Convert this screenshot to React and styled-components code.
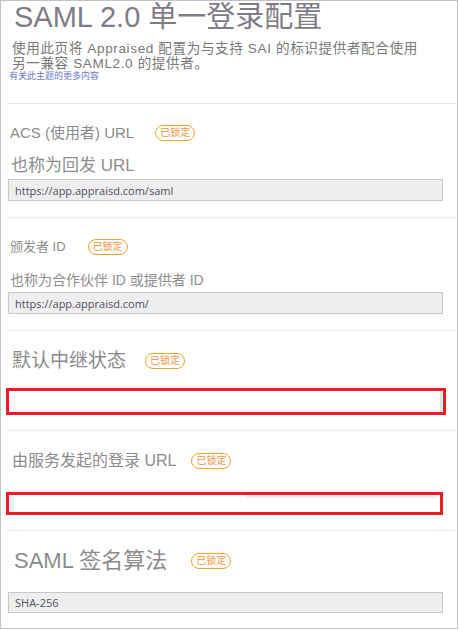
import React from "react";
import styled, { createGlobalStyle } from "styled-components";

const Global = createGlobalStyle`
  html, body { margin: 0; padding: 0; background: #ffffff; }
  body { font-family: "Liberation Sans", "Noto Sans CJK SC", sans-serif; }
  * { box-sizing: border-box; }
`;

const Frame = styled.div`
  width: 458px;
  height: 629px;
  border: 1px solid #c4c4c4;
  display: flex;
  flex-direction: column;
  overflow: hidden;
  background: #fff;
`;

const Header = styled.header`
  height: 102px;
  display: flex;
  flex-direction: column;
`;

const Title = styled.h1`
  margin: 0;
  padding-left: 13px;
  font-weight: normal;
  font-size: 29px;
  line-height: 32px;
  color: #7f7c87;
  white-space: nowrap;
`;

const Description = styled.p`
  margin: 8px 0 0 0;
  padding-left: 11px;
  font-size: 13.6px;
  line-height: 15px;
  letter-spacing: 0.6px;
  color: #787878;
  white-space: nowrap;
`;

const MoreLink = styled.a`
  display: block;
  padding-left: 8px;
  font-size: 9px;
  line-height: 10px;
  color: #6a7cd0;
  text-decoration: none;
`;

const Section = styled.section`
  margin-left: 7px;
  border-top: 1px solid #e8e8e8;
  padding-bottom: ${(p) => p.$pb}px;
  display: flex;
  flex-direction: column;
`;

const HeadRow = styled.div`
  margin-top: ${(p) => p.$mt}px;
  height: 16px;
  display: flex;
  align-items: center;
  gap: ${(p) => p.$gap}px;
  padding-left: ${(p) => p.$indent}px;
`;

const Label = styled.span`
  font-size: ${(p) => p.$size}px;
  line-height: 16px;
  color: #8c8c8c;
  white-space: nowrap;
`;

const Badge = styled.span`
  width: 40px;
  height: 16px;
  border: 1.5px solid #f6a02c;
  border-radius: 8px;
  display: inline-flex;
  align-items: center;
  justify-content: center;
  font-size: 10px;
  line-height: 12px;
  color: #f2953d;
  flex: none;
`;

const SubLabel = styled.div`
  margin-top: ${(p) => p.$mt}px;
  padding-left: ${(p) => p.$indent}px;
  font-size: ${(p) => p.$size}px;
  line-height: 20px;
  color: #8e8e8e;
  white-space: nowrap;
`;

const Field = styled.div`
  margin-top: ${(p) => p.$mt}px;
  width: 435px;
  height: ${(p) => p.$h}px;
  background: #eeeeee;
  border: 1px solid #c8c8c8;
  padding-left: 6px;
  display: flex;
  align-items: center;
  font-family: "Open Sans", "Liberation Sans", sans-serif;
  font-size: 11px;
  color: #505060;
`;

const Highlight = styled.div`
  margin-top: ${(p) => p.$mt}px;
  margin-left: -2px;
  width: ${(p) => p.$w}px;
  height: ${(p) => p.$h}px;
  border: 3px solid #ed1c24;
  display: flex;
`;

const BlankField = styled.div`
  flex: 1;
  background: #ffffff;
  border-right: 2px solid #e2e2e2;
  margin-right: 1px;
`;

const PartialField = styled.div`
  flex: 1;
  border-left: 4px solid #ededed;
  margin-left: 1px;
  margin-right: 4px;
  background: linear-gradient(#ededed, #ededed) no-repeat right 0 top 0 / 190px 3px,
    #ffffff;
`;

export default function App() {
  return (
    <>
      <Global />
      <Frame>
        <Header>
          <Title>SAML 2.0 单一登录配置</Title>
          <Description>
            使用此页将 Appraised 配置为与支持 SAI 的标识提供者配合使用
            <br />
            另一兼容 SAML2.0 的提供者。
          </Description>
          <MoreLink href="#">有关此主题的更多内容</MoreLink>
        </Header>

        <Section $pb={16}>
          <HeadRow $mt={21} $gap={21} $indent={2}>
            <Label $size={15}>ACS (使用者) URL</Label>
            <Badge>已锁定</Badge>
          </HeadRow>
          <SubLabel $mt={15} $indent={3} $size={17}>
            也称为回发 URL
          </SubLabel>
          <Field $mt={3} $h={22}>https://app.appraisd.com/saml</Field>
        </Section>

        <Section $pb={16}>
          <HeadRow $mt={21} $gap={22} $indent={2}>
            <Label $size={13}>颁发者 ID</Label>
            <Badge>已锁定</Badge>
          </HeadRow>
          <SubLabel $mt={15} $indent={2} $size={14}>
            也称为合作伙伴 ID 或提供者 ID
          </SubLabel>
          <Field $mt={2} $h={22}>https://app.appraisd.com/</Field>
        </Section>

        <Section $pb={15}>
          <HeadRow $mt={22} $gap={19} $indent={4}>
            <Label $size={19}>默认中继状态</Label>
            <Badge>已锁定</Badge>
          </HeadRow>
          <Highlight $mt={19} $w={440} $h={27}>
            <BlankField />
          </Highlight>
        </Section>

        <Section $pb={15}>
          <HeadRow $mt={22} $gap={15} $indent={4}>
            <Label $size={16}>由服务发起的登录 URL</Label>
            <Badge>已锁定</Badge>
          </HeadRow>
          <Highlight $mt={23} $w={437} $h={23}>
            <PartialField />
          </Highlight>
        </Section>

        <Section $pb={0}>
          <HeadRow $mt={22} $gap={24} $indent={6}>
            <Label $size={22}>SAML 签名算法</Label>
            <Badge>已锁定</Badge>
          </HeadRow>
          <Field $mt={23} $h={21}>SHA-256</Field>
        </Section>
      </Frame>
    </>
  );
}
